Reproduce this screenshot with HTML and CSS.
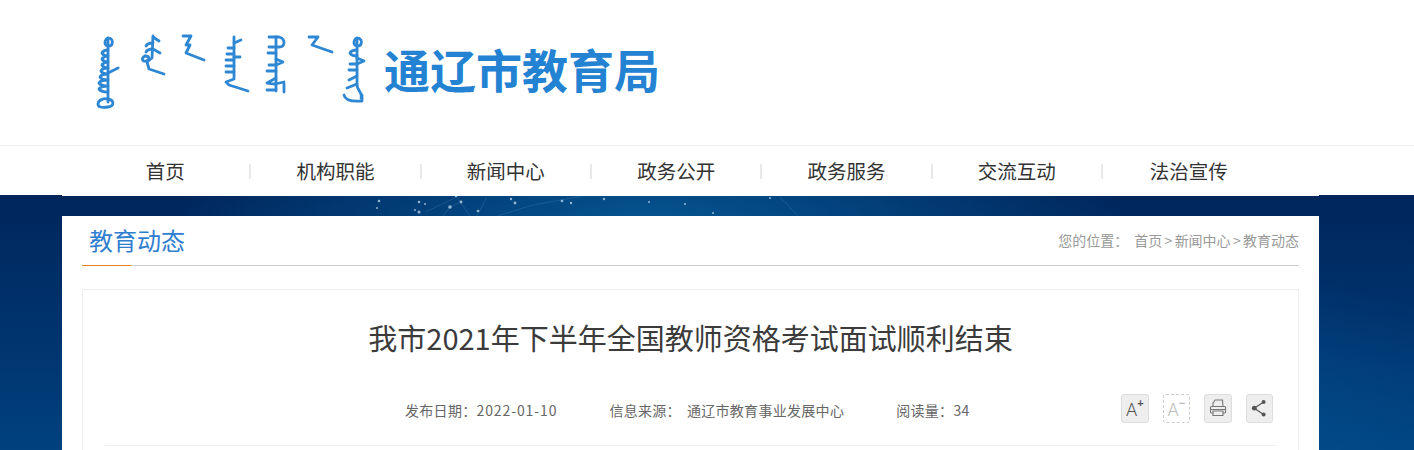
FILE: index.html
```html
<!DOCTYPE html>
<html lang="zh-CN">
<head>
<meta charset="utf-8">
<title>通辽市教育局</title>
<link rel="stylesheet" href="styles.css">
</head>
<body>
<header class="top">
  <div class="logo">
    <svg class="logo-mark" width="280" height="80" viewBox="90 32 280 80" aria-hidden="true">
      <g class="mark-stroke">
        <path d="M108 40V102"/><path d="M108 38c4 0 5 3 4 6s-7 2-7-1 2-5 3-5"/>
        <path d="M108 50c-3 0-5 1-6 3 1 2 3 3 6 3M108 56c-3 0-5 1-6 3 1 2 3 3 6 3M108 62c-3 0-5 1-6 3 1 2 3 3 6 3M108 68c-3 0-6 1-7 3 1 2 4 3 7 3M108 74c-3 0-7 1-8 3 1 2 5 3 8 3M108 80c-3 0-8 1-9 3 1 2 6 3 9 3M108 86c-3 0-8 1-9 3 1 2 6 3 9 3"/>
        <path d="M108 73l10-5"/><path d="M108 107c-7 1-10 0-10-3 0-4 6-6 10-5 6 1 7 7 0 8"/>
        <path d="M153 36l-1 22-5 4 2 7 15 5"/><path d="M153 37l6 4M153 43c-3 0-6 1-7 3M153 49c-3 0-6 1-7 3M153 49l7 4"/><path d="M145 56c-4 2-3 6 1 5s4-5-1-5"/>
        <path d="M183 36h8l-5 9h4l-4 8 18 7"/>
        <path d="M234 37v42l-8 3 3 3 19 6"/><path d="M234 43l7-3M234 48h-6M234 54h-7M234 60h-8M234 66h-8M234 72h-8M234 57h6"/>
        <path d="M276 37v54"/><path d="M269 37h10c7 2 6 9 1 10h-11"/><path d="M276 53h-8M276 59l7 3-7 3h-7M276 71h-9M276 78l-9 5 8 1 9-2M276 90h-9M284 84v8"/>
        <path d="M309 37l9 0-6 8 20 7"/>
        <path d="M357 40v45c0 5 6 8 4 13"/><path d="M357 38c4 0 5 3 4 6s-7 2-7-1 2-5 3-5"/>
        <path d="M357 50c-3 0-6 1-7 3 1 2 4 3 7 3M357 58l7 3-7 3h-7M357 70h-8M357 76l-8 4M357 84l-10 4"/><path d="M344 95c1 5 6 7 18 6v-6"/>
      </g>
    </svg>
    <span class="logo-text">通辽市教育局</span>
  </div>
</header>

<nav class="nav">
  <ul class="nav-list">
    <li class="nav-item">首页</li>
    <li class="nav-item">机构职能</li>
    <li class="nav-item">新闻中心</li>
    <li class="nav-item">政务公开</li>
    <li class="nav-item">政务服务</li>
    <li class="nav-item">交流互动</li>
    <li class="nav-item">法治宣传</li>
  </ul>
</nav>

<div class="stage">
  <svg class="stars" width="1414" height="21" viewBox="0 195 1414 21" aria-hidden="true">
    <g class="star-lines">
      <path d="M425 212l32-15M450 207l-7 9M450 207l11-5M457 197l13 19M487 197l-10 19M497 216l36-11M780 197l17 18M533 205l55-10"/>
    </g>
    <g class="star-dots">
      <circle cx="379" cy="201" r="1.300"/><circle cx="377" cy="208" r="1"/><circle cx="419" cy="202" r="1.300"/><circle cx="425" cy="204" r="1"/>
      <circle cx="415" cy="210" r="1"/><circle cx="419" cy="212" r="1.500"/><circle cx="450" cy="207" r="1.800"/><circle cx="461" cy="202" r="1.400"/>
      <circle cx="456" cy="196" r="1.300"/><circle cx="478" cy="211" r="1.300"/><circle cx="511" cy="199" r="1.200"/><circle cx="515" cy="203" r="1.400"/>
      <circle cx="562" cy="201" r="1.300"/><circle cx="571" cy="203" r="1.200"/><circle cx="604" cy="199" r="1.200"/><circle cx="649" cy="202" r="1"/>
      <circle cx="685" cy="204" r="1"/><circle cx="713" cy="213" r="1"/><circle cx="770" cy="198" r="1"/>
    </g>
  </svg>
  <main class="sheet">
    <div class="sheet-head">
      <h2 class="section-title">教育动态</h2>
      <div class="crumbs"><span class="crumbs-label">您的位置：</span>首页<span class="crumbs-sep">&gt;</span>新闻中心<span class="crumbs-sep">&gt;</span>教育动态</div>
    </div>
    <article class="card">
      <h1 class="headline">我市2021年下半年全国教师资格考试面试顺利结束</h1>
      <div class="meta-row">
        <div class="meta">
          <span>发布日期：<span class="meta-date">2022-01-10</span></span>
          <span><span class="meta-label">信息来源：</span>通辽市教育事业发展中心</span>
          <span>阅读量：34</span>
        </div>
        <div class="tools">
          <span class="tool"><span class="tool-a">A</span><span class="tool-sign">+</span></span>
          <span class="tool tool-off"><span class="tool-a">A</span><span class="tool-sign">−</span></span>
          <span class="tool">
            <svg width="18" height="18" viewBox="0 0 18 18" class="tool-svg" aria-hidden="true"><path d="M4 7.500V4l2.200-3h7.300l.500 6.500M3.500 14h-1a1 1 0 0 1-1-1V8.500a1 1 0 0 1 1-1h13a1 1 0 0 1 1 1V13a1 1 0 0 1-1 1h-1M1.500 10.500h15M4 12h10v4.500H4z"/></svg>
          </span>
          <span class="tool">
            <svg width="18" height="18" viewBox="0 0 18 18" class="tool-fill" aria-hidden="true"><path class="tool-link" d="M13.600 3.100L4.300 9.200l9.300 6.300"/><circle cx="13.600" cy="3.100" r="2"/><circle cx="4.300" cy="9.200" r="2.400"/><circle cx="13.600" cy="15.500" r="2"/></svg>
          </span>
        </div>
      </div>
      <div class="card-rule"></div>
    </article>
  </main>
</div>
</body>
</html>
```
FILE: styles.css
```css
* { box-sizing: border-box; }
html, body { margin: 0; padding: 0; height: 450px; overflow: hidden; background: #fff; }
body { font-family: "Noto Sans CJK SC", "Liberation Sans", sans-serif; color: #333; }
ul { list-style: none; margin: 0; padding: 0; }
h1, h2 { margin: 0; font-weight: 400; }

.top { height: 145px; padding: 32px 0 0 90px; }
.logo { display: flex; align-items: flex-start; }
.logo-mark { display: block; flex: none; filter: blur(.4px); }
.mark-stroke { fill: none; stroke: #2e87d3; stroke-width: 2.800; stroke-linecap: round; stroke-linejoin: round; }
.logo-text { margin: 3px 0 0 14px; font-size: 46px; line-height: 66px; font-weight: 700; color: #2482d2; white-space: nowrap; }

.nav { position: relative; z-index: 1; height: 50px; border-top: 1px solid #eee; background: #fff; }
.nav::after { content: ""; position: absolute; left: 62px; bottom: -1px; width: 1257px; height: 1px; background: #fff; }
.nav-list { display: flex; padding-left: 80px; }
.nav-item { position: relative; width: 170.330px; height: 49px; line-height: 50px; text-align: center; font-size: 19.500px; color: #333; }
.nav-item:last-child { text-indent: 3px; }
.nav-item + .nav-item::before { content: ""; position: absolute; left: -1px; top: 18px; width: 2px; height: 15px; background: #e8e8e8; }

.stage { position: relative; height: 255px; overflow: hidden; padding-top: 21px;
  background:
    radial-gradient(ellipse 480px 130px at 46% 12%, #055692 0%, rgba(5,86,146,0) 100%),
    radial-gradient(ellipse 780px 240px at 58% 105%, #05589a 0%, rgba(5,88,154,0) 100%),
    linear-gradient(180deg, #00265c 0%, #00346e 55%, #00417e 100%); }
.stars { position: absolute; left: 0; top: 0; }
.star-lines { fill: none; stroke: rgba(140,200,240,.16); stroke-width: 1; }
.star-dots { fill: #cfe6f5; opacity: .7; }

.sheet { position: relative; width: 1257px; height: 240px; margin-left: 62px; padding: 0 20px; background: #fff; }
.sheet-head { display: flex; justify-content: space-between; align-items: flex-end; height: 50px; border-bottom: 1px solid #ccc; position: relative; }
.sheet-head::after { content: ""; position: absolute; left: 0; bottom: -1px; width: 49px; height: 1px; background: #e8841c; }
.section-title { padding-left: 7px; font-size: 24px; line-height: 50px; height: 50px; color: #2f7ed0; }
.crumbs { font-size: 14px; line-height: 20px; padding-bottom: 15px; color: #999; white-space: nowrap; }
.crumbs-label { margin-right: 6px; }
.crumbs-sep { padding: 0 2.300px; }

.card { height: 300px; margin-top: 23px; padding: 0 22px; border: 1px solid #eee; }
.headline { margin-top: 25px; font-size: 29px; line-height: 44px; text-align: center; color: #3b3b3b; white-space: nowrap; }
.meta-row { display: flex; justify-content: space-between; align-items: center; height: 30px; margin-top: 34px; padding-right: 3px; }
.meta { display: flex; gap: 52px; margin-top: 4px; padding-left: 300px; font-size: 14px; line-height: 20px; color: #666; letter-spacing: .3px; white-space: nowrap; }
.meta-date { letter-spacing: .9px; }
.meta-label { margin-right: 6px; }
.tools { display: flex; gap: 14px; }
.tool { display: flex; align-items: center; justify-content: center; width: 27.500px; height: 29px; background: #eee; border: 1px solid #ddd; border-radius: 3px; color: #555; }
.tool-off { border: 1px dashed #ccc; background: #fff; color: #bbb; }
.tool-a { font-family: Roboto, "Liberation Sans", sans-serif; font-weight: 300; font-size: 18px; line-height: 20px; margin-top: 3px; }
.tool-sign { font-family: "Liberation Sans", sans-serif; font-size: 11px; line-height: 12px; margin-bottom: 10px; font-weight: 700; }
.tool-svg { fill: none; stroke: #777; stroke-width: 1.100; }
.tool-fill { fill: #555; }
.tool-link { fill: none; stroke: #555; stroke-width: 1.200; }
.card-rule { height: 1px; margin-top: 22px; background: #eee; }
```
